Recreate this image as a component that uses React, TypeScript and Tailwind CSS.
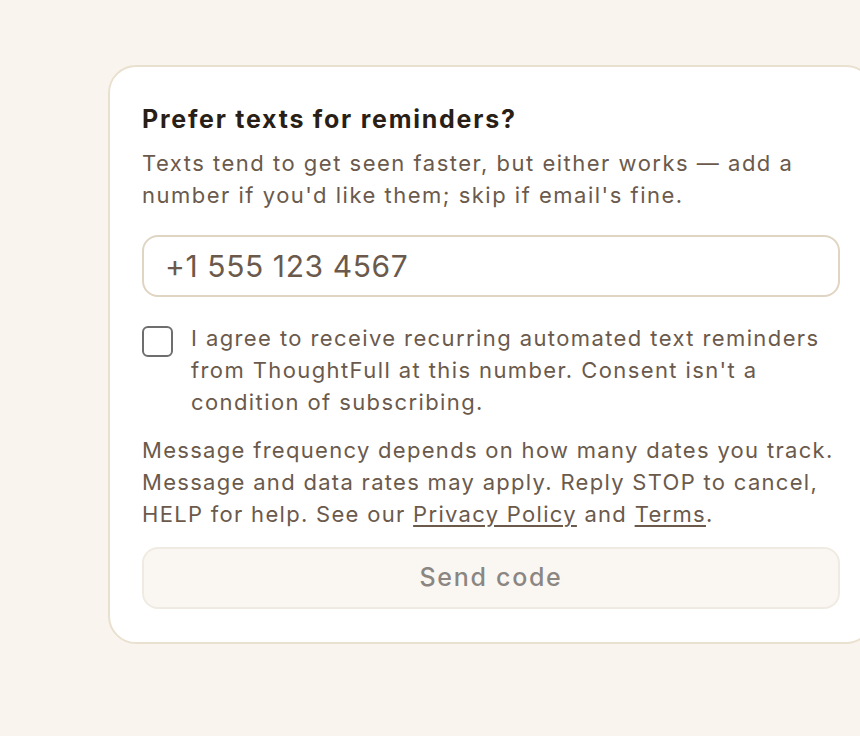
import React from "react";

export default function App() {
  return (
    <div className="w-[860px] h-[736px] overflow-hidden bg-[#f9f5ee]">
      <div className="pt-[65px] pl-[108px]">
        <div
          className="w-[766px] rounded-[28px] border-2 border-[#e9e0d0] bg-white px-[32px] pt-[32px] pb-[33px]"
          style={{ fontFamily: 'Inter, "Noto Sans", sans-serif' }}
        >
          <h2 className="text-[25px] leading-[40px] font-bold tracking-[1.75px] text-[#2a1f17]">
            Prefer texts for reminders?
          </h2>
          <p className="mt-[8px] text-[22px] leading-[32px] tracking-[1.5px] text-[#6b5a4c] whitespace-nowrap">
            Texts tend to get seen faster, but either works — add a<br />
            number if you'd like them; skip if email's fine.
          </p>
          <div className="mt-[24px] w-[698px] h-[62px] rounded-[16px] border-2 border-[#e0d5c3] flex items-center px-[21px] text-[30px] tracking-[0.6px] text-[#6b5a4c]">
            +1 555 123 4567
          </div>
          <div className="mt-[25px] flex gap-[18px] items-start">
            <div className="mt-[4px] w-[31px] h-[31px] shrink-0 rounded-[6px] border-2 border-[#6e6e6e]" />
            <p className="text-[22px] leading-[32px] tracking-[1.4px] text-[#6b5a4c] whitespace-nowrap">
              I agree to receive recurring automated text reminders<br />
              from ThoughtFull at this number. Consent isn't a<br />
              condition of subscribing.
            </p>
          </div>
          <p className="mt-[16px] text-[22px] leading-[32px] tracking-[1.3px] text-[#6b5a4c] whitespace-nowrap">
            Message frequency depends on how many dates you track.<br />
            Message and data rates may apply. Reply STOP to cancel,<br />
            HELP for help. See our{" "}
            <span className="underline underline-offset-[3px]">Privacy Policy</span> and{" "}
            <span className="underline underline-offset-[3px]">Terms</span>.
          </p>
          <div className="mt-[17px] w-[698px] h-[62px] rounded-[16px] border-2 border-[#f0ebe2] bg-[#faf7f2] flex items-center justify-center text-[25px] tracking-[1.7px] text-[#8b8682] font-medium">
            Send code
          </div>
        </div>
      </div>
    </div>
  );
}
